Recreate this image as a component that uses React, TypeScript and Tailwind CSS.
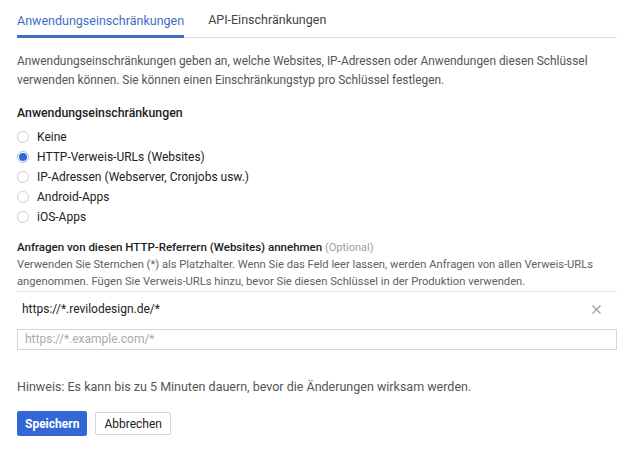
import * as React from "react";

const OPTIONS = [
  "Keine",
  "HTTP-Verweis-URLs (Websites)",
  "IP-Adressen (Webserver, Cronjobs usw.)",
  "Android-Apps",
  "iOS-Apps",
];

function Radio({ checked, label, onSelect }: { checked: boolean; label: string; onSelect: () => void }) {
  return (
    <label className="flex h-5 cursor-pointer items-center gap-2" onClick={onSelect}>
      <span
        className={
          checked
            ? "grid size-3 place-items-center rounded-full border border-[#a9bff0] bg-white"
            : "grid size-3 place-items-center rounded-full border border-[#cfcfcf] bg-white"
        }
      >
        {checked && <span className="size-2 rounded-full bg-[#3367d6]" />}
      </span>
      <span className="text-[12px] text-[#212121]">{label}</span>
    </label>
  );
}

export default function App() {
  const [selected, setSelected] = React.useState(1);

  return (
    <div className="h-[468px] w-[642px] overflow-hidden bg-white px-[17px] font-['Roboto',sans-serif] text-[#212121]">
      <div className="flex h-[38px] w-[600px] items-stretch border-b border-[#dcdcdc]">
        <div className="flex flex-col justify-end">
          <span className="pb-[4px] text-[12.5px] leading-5 text-[#3b6fc4]">Anwendungseinschränkungen</span>
          <span className="-mb-px h-[3px] bg-[#3b6fc4]" />
        </div>
        <div className="ml-6 flex flex-col justify-end">
          <span className="pb-[7px] text-[12.5px] leading-5 text-[#444]">API-Einschränkungen</span>
        </div>
      </div>

      <p className="mt-[14px] text-[11.9px] leading-[19px] text-[#555]">
        Anwendungseinschränkungen geben an, welche Websites, IP-Adressen oder Anwendungen diesen Schlüssel
        <br />
        verwenden können. Sie können einen Einschränkungstyp pro Schlüssel festlegen.
      </p>

      <h2 className="mt-[13px] text-[12.3px] font-medium leading-5">Anwendungseinschränkungen</h2>
      <div className="mt-1 flex flex-col">
        {OPTIONS.map((o, i) => (
          <Radio key={o} checked={selected === i} label={o} onSelect={() => setSelected(i)} />
        ))}
      </div>

      <div className="mt-[12px] text-[11.2px] leading-[17px]">
        <div>
          <span className="text-[11.5px] font-medium">Anfragen von diesen HTTP-Referrern (Websites) annehmen</span>{" "}
          <span className="text-[11px] text-[#9e9e9e]">(Optional)</span>
        </div>
        <p className="text-[#616161]">
          Verwenden Sie Sternchen (*) als Platzhalter. Wenn Sie das Feld leer lassen, werden Anfragen von allen Verweis-URLs
          <br />
          angenommen. Fügen Sie Verweis-URLs hinzu, bevor Sie diesen Schlüssel in der Produktion verwenden.
        </p>
      </div>

      <div className="mt-px w-[600px] border-t border-[#e0e0e0]">
        <div className="flex h-[34px] items-center justify-between pl-[5px] pr-[16px]">
          <span className="text-[12px] text-[#212121]">https://*.revilodesign.de/*</span>
          <svg width="9" height="9" viewBox="0 0 9 9" className="text-[#9e9e9e]">
            <path d="M0.5 0.5L8.5 8.5M8.5 0.5L0.5 8.5" stroke="currentColor" strokeWidth="1.2" />
          </svg>
        </div>
        <input
          className="mt-[2px] h-[21px] w-full border border-[#d6d6d6] px-[7px] text-[12px] outline-none placeholder:text-[#aaa]"
          placeholder="https://*.example.com/*"
        />
      </div>

      <p className="mt-[27px] text-[12.5px] leading-5 text-[#555]">
        Hinweis: Es kann bis zu 5 Minuten dauern, bevor die Änderungen wirksam werden.
      </p>

      <div className="mt-[14px] flex items-center gap-2">
        <button className="h-[25px] rounded-[2px] bg-[#3367d6] px-2 text-[12px] font-bold text-white">
          Speichern
        </button>
        <button className="h-[23px] rounded-[2px] border border-[#d6d6d6] bg-white px-2 text-[12px] text-[#212121]">
          Abbrechen
        </button>
      </div>
    </div>
  );
}
